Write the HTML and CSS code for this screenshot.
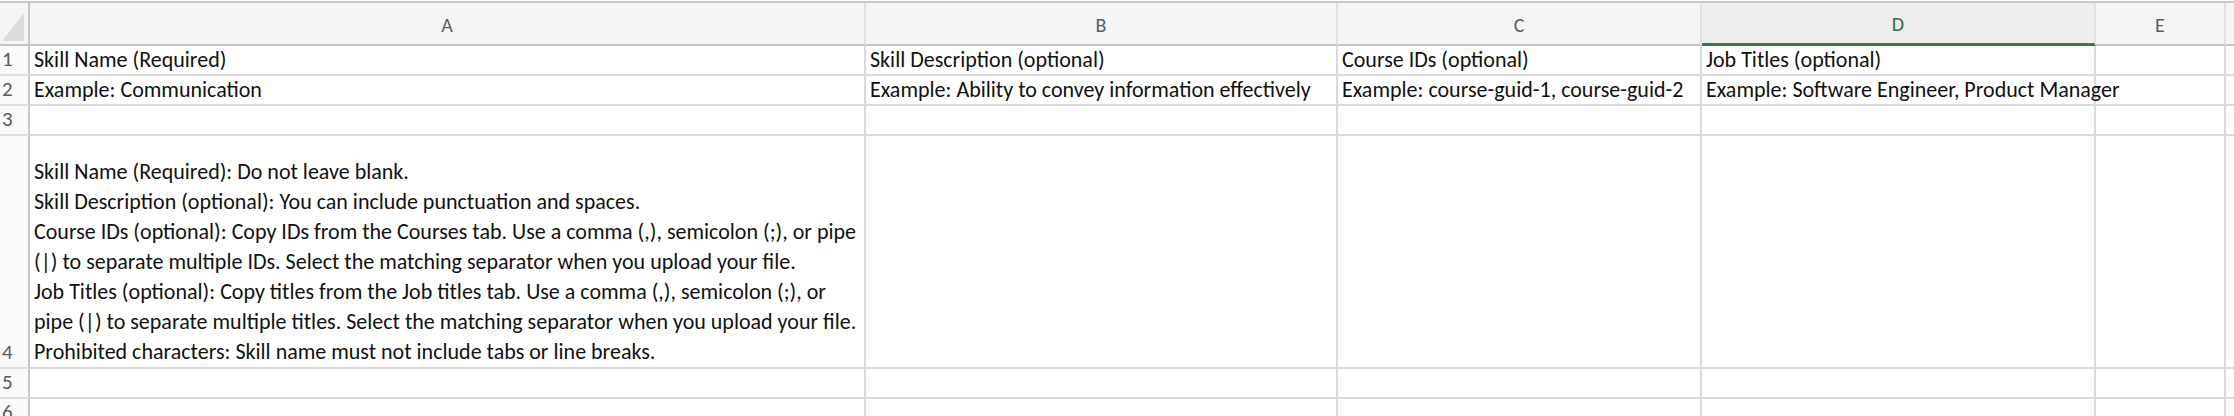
FILE: index.html
```html
<!DOCTYPE html>
<html lang="en">
<head>
<meta charset="utf-8">
<title>Skills template</title>
<link rel="stylesheet" href="styles.css">
</head>
<body>
<div class="sheet">
  <div class="corner"><span class="tri"></span></div>
  <div class="colhead">A</div>
  <div class="colhead">B</div>
  <div class="colhead">C</div>
  <div class="colhead active">D</div>
  <div class="colhead">E</div>
  <div class="colhead last"></div>

  <div class="rowhead">1</div>
  <div class="cell">Skill Name (Required)</div>
  <div class="cell">Skill Description (optional)</div>
  <div class="cell">Course IDs (optional)</div>
  <div class="cell">Job Titles (optional)</div>
  <div class="cell"></div>
  <div class="cell last"></div>

  <div class="rowhead">2</div>
  <div class="cell">Example: Communication</div>
  <div class="cell">Example: Ability to convey information effectively</div>
  <div class="cell">Example: course-guid-1, course-guid-2</div>
  <div class="cell overflow">Example: Software Engineer, Product Manager</div>
  <div class="cell"></div>
  <div class="cell last"></div>

  <div class="rowhead">3</div>
  <div class="cell"></div>
  <div class="cell"></div>
  <div class="cell"></div>
  <div class="cell"></div>
  <div class="cell"></div>
  <div class="cell last"></div>

  <div class="rowhead">4</div>
  <div class="cell multi">
    <span class="ln">Skill Name (Required): Do not leave blank.</span>
    <span class="ln">Skill Description (optional): You can include punctuation and spaces.</span>
    <span class="ln">Course IDs (optional): Copy IDs from the Courses tab. Use a comma (,), semicolon (;), or pipe</span>
    <span class="ln">(|) to separate multiple IDs. Select the matching separator when you upload your file.</span>
    <span class="ln">Job Titles (optional): Copy titles from the Job titles tab. Use a comma (,), semicolon (;), or</span>
    <span class="ln">pipe (|) to separate multiple titles. Select the matching separator when you upload your file.</span>
    <span class="ln">Prohibited characters: Skill name must not include tabs or line breaks.</span>
  </div>
  <div class="cell"></div>
  <div class="cell"></div>
  <div class="cell"></div>
  <div class="cell"></div>
  <div class="cell last"></div>

  <div class="rowhead">5</div>
  <div class="cell"></div>
  <div class="cell"></div>
  <div class="cell"></div>
  <div class="cell"></div>
  <div class="cell"></div>
  <div class="cell last"></div>

  <div class="rowhead">6</div>
  <div class="cell"></div>
  <div class="cell"></div>
  <div class="cell"></div>
  <div class="cell"></div>
  <div class="cell"></div>
  <div class="cell last"></div>
</div>
</body>
</html>
```
FILE: styles.css
```css
html, body {
  margin: 0;
  padding: 0;
  background: #ffffff;
  overflow: hidden;
}

.sheet {
  margin-top: 1px;
  border-top: 2px solid #c9c9c9;
  display: grid;
  grid-template-columns: 30px 836px 472px 364px 394px 130px 1fr;
  grid-template-rows: 43px 30px 30px 30px 233px 30px 30px;
  font-family: Carlito, Calibri, Lato, "Open Sans", sans-serif;
  font-size: 22px;
  color: #111111;
}

.corner {
  position: relative;
  background: #f5f5f5;
  border-right: 2px solid #c6c6c6;
  border-bottom: 2px solid #c4c4c4;
  box-sizing: border-box;
}

.tri {
  position: absolute;
  right: 4px;
  bottom: 3px;
  width: 0;
  height: 0;
  border-left: 22px solid transparent;
  border-bottom: 28px solid #dcdcdc;
}

.colhead {
  background: #f5f5f5;
  border-right: 2px solid #e2e2e2;
  border-bottom: 2px solid #c4c4c4;
  box-sizing: border-box;
  display: flex;
  align-items: center;
  justify-content: center;
  padding-top: 2px;
  color: #5c5c5c;
  font-size: 20px;
}

.colhead.active {
  color: #2f6e3f;
  background: #eeeeee;
  border-bottom: 3px solid #3b7a4b;
}

.colhead.last,
.cell.last {
  border-right: none;
}

.rowhead {
  background: #f9f9f9;
  border-right: 2px solid #c6c6c6;
  border-bottom: 2px solid #dedede;
  box-sizing: border-box;
  display: flex;
  align-items: flex-end;
  padding-left: 2px;
  padding-bottom: 1px;
  color: #5a5a5a;
  font-size: 21px;
  line-height: 28px;
}

.cell {
  border-right: 2px solid #dadada;
  border-bottom: 2px solid #dadada;
  box-sizing: border-box;
  display: flex;
  flex-direction: column;
  justify-content: flex-end;
  padding: 0 0 0 4px;
  line-height: 28px;
  white-space: nowrap;
  min-width: 0;
}

.cell.overflow {
  position: relative;
  z-index: 1;
  overflow: visible;
}

.cell.multi {
  line-height: 30px;
  padding-bottom: 0;
}

.ln {
  display: block;
}
```
